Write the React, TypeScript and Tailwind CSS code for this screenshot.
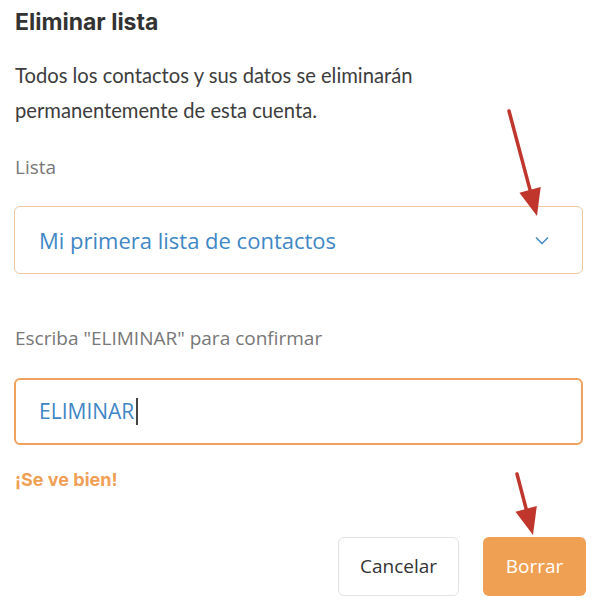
import React from 'react';

// Red annotation arrow: shaft plus a filled triangular head at (x2, y2)
const Arrow = ({ x1, y1, x2, y2 }: { x1: number; y1: number; x2: number; y2: number }) => {
  const dx = x2 - x1;
  const dy = y2 - y1;
  const len = Math.hypot(dx, dy);
  const ux = dx / len;
  const uy = dy / len;
  const headLen = 27;
  const headHalf = 11;
  const bx = x2 - ux * headLen;
  const by = y2 - uy * headLen;
  const p1 = `${bx - uy * headHalf},${by + ux * headHalf}`;
  const p2 = `${bx + uy * headHalf},${by - ux * headHalf}`;
  return (
    <g>
      <line x1={x1} y1={y1} x2={bx + ux * 2} y2={by + uy * 2} stroke="#c0362c" strokeWidth={3.5} strokeLinecap="round" />
      <polygon points={`${x2},${y2} ${p1} ${p2}`} fill="#c0362c" />
    </g>
  );
};

export default function App() {
  return (
    <div className="relative w-[594px] h-[612px] bg-white overflow-hidden">
      <div className="flex flex-col pl-[15px] pr-[11px] pt-[7px]">
        <h2 className="text-[23px] font-bold text-[#333] leading-[30px] font-['Inter',sans-serif]">
          Eliminar lista
        </h2>

        <p className="mt-[21px] text-[20.2px] leading-[35px] text-[#3d3d3d] font-['Lato',sans-serif]">
          Todos los contactos y sus datos se eliminarán
          <br />
          permanentemente de esta cuenta.
        </p>

        <label className="mt-[27px] text-[19px] leading-[24px] text-[#777] font-['Open_Sans',sans-serif]">
          Lista
        </label>

        <div className="mt-[27px] -ml-px h-[68px] rounded-[6px] border border-[#f1c69c] flex items-center justify-between pl-[24px] pr-[33px]">
          <span className="text-[22px] text-[#3f87c5] font-['Open_Sans',sans-serif]">
            Mi primera lista de contactos
          </span>
          <svg width="14" height="9" viewBox="0 0 14 9" fill="none">
            <path d="M1 1.5L7 7.5L13 1.5" stroke="#3f87c5" strokeWidth="1.4" />
          </svg>
        </div>

        <label className="mt-[52px] text-[19px] leading-[24px] text-[#777] font-['Open_Sans',sans-serif]">
          Escriba "ELIMINAR" para confirmar
        </label>

        <div className="mt-[28px] -ml-px h-[67px] rounded-[6px] border-2 border-[#efa25f] flex items-center pl-[23px]">
          <span className="text-[21px] text-[#3f87c5] font-['Open_Sans',sans-serif]">ELIMINAR</span>
          <span className="ml-[2px] w-[2px] h-[27px] bg-[#444]" />
        </div>

        <span className="mt-[23px] text-[18px] leading-[24px] font-bold text-[#f0a055] font-['Inter',sans-serif]">
          ¡Se ve bien!
        </span>

        <div className="mt-[45px] flex justify-end gap-[24px] -mr-[3px]">
          <button className="w-[121px] h-[59px] rounded-[6px] border border-[#e2e2e2] bg-white text-[19px] text-[#333] font-['Open_Sans',sans-serif]">
            Cancelar
          </button>
          <button className="w-[103px] h-[59px] rounded-[6px] bg-[#f0a052] text-[19px] text-white font-['Open_Sans',sans-serif]">
            Borrar
          </button>
        </div>
      </div>

      <svg className="absolute inset-0 pointer-events-none" width="594" height="612">
        <Arrow x1={509} y1={111} x2={537} y2={216} />
        <Arrow x1={517} y1={474} x2={533} y2={535} />
      </svg>
    </div>
  );
}
